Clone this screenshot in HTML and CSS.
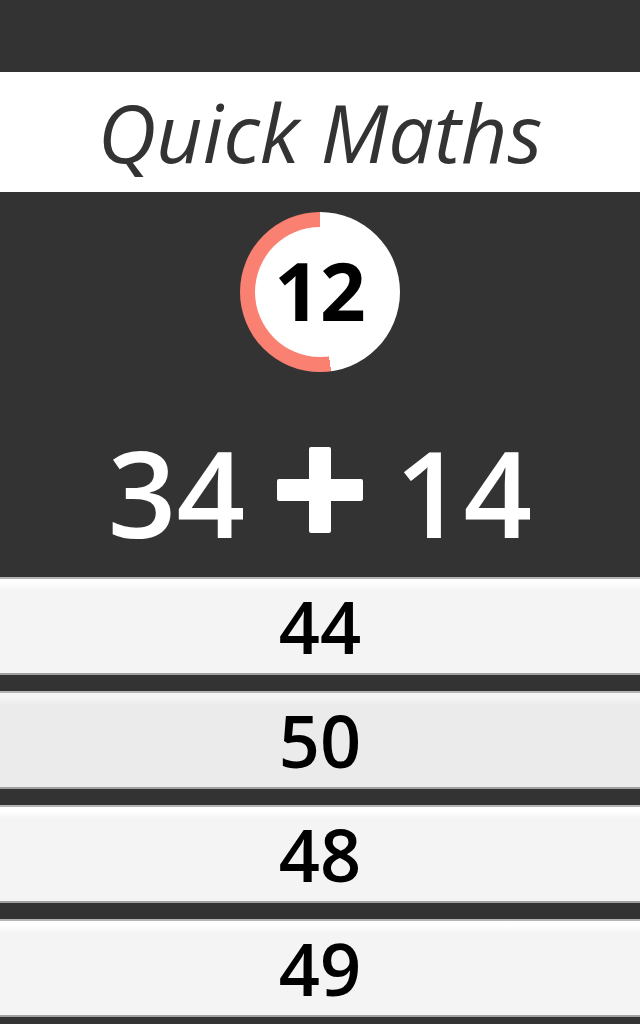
FILE: index.html
```html
<!DOCTYPE html>
<html lang="en">
<head>
<meta charset="utf-8">
<title>Quick Maths</title>
<link rel="stylesheet" href="styles.css">
</head>
<body>
<div class="topbar"></div>
<header class="header"><h1 class="title">Quick Maths</h1></header>
<section class="stage">
  <div class="timer">
    <div class="timer-face">12</div>
  </div>
  <div class="equation">
    <span class="operand">34</span>
    <svg class="op" width="86" height="86" viewBox="0 0 86 86" aria-label="plus">
      <path d="M34 0h18a2 2 0 0 1 2 2v30h30a2 2 0 0 1 2 2v18a2 2 0 0 1-2 2H54v30a2 2 0 0 1-2 2H34a2 2 0 0 1-2-2V54H2a2 2 0 0 1-2-2V34a2 2 0 0 1 2-2h30V2a2 2 0 0 1 2-2z" fill="#fff"/>
    </svg>
    <span class="operand">14</span>
  </div>
</section>
<main class="answers">
  <button class="answer">44</button>
  <button class="answer answer-active">50</button>
  <button class="answer">48</button>
  <button class="answer">49</button>
</main>
</body>
</html>
```
FILE: styles.css
```css
html, body {
  margin: 0;
  padding: 0;
}
body {
  background: #333333;
  font-family: "Open Sans", "Noto Sans", sans-serif;
  width: 640px;
  height: 1024px;
  overflow: hidden;
}
.topbar {
  height: 72px;
}
.header {
  height: 120px;
  background: #ffffff;
  display: flex;
  align-items: center;
  justify-content: center;
}
.title {
  margin: 0;
  font-size: 81px;
  font-style: italic;
  font-weight: 400;
  color: #333333;
  line-height: normal;
  padding-bottom: 2px;
}
.stage {
  display: flex;
  flex-direction: column;
  align-items: center;
  padding: 20px 0 25px;
}
.timer {
  width: 160px;
  height: 160px;
  border-radius: 50%;
  background: conic-gradient(#ffffff 0deg 172deg, #fa8072 172deg 360deg);
  display: flex;
  align-items: center;
  justify-content: center;
}
.timer-face {
  width: 130px;
  height: 130px;
  border-radius: 50%;
  background: #ffffff;
  display: flex;
  align-items: center;
  justify-content: center;
  font-size: 80px;
  font-weight: 700;
  color: #000000;
  line-height: 1;
  padding-bottom: 4px;
  box-sizing: border-box;
}
.equation {
  margin-top: 60px;
  height: 120px;
  display: flex;
  align-items: center;
  justify-content: center;
  gap: 32px;
  color: #ffffff;
}
.operand {
  font-size: 120px;
  font-weight: 600;
  line-height: 1;
}
.op {
  display: block;
  margin-top: -4px;
}
.answers {
  display: flex;
  flex-direction: column;
  gap: 16px;
}
.answer {
  display: flex;
  align-items: center;
  justify-content: center;
  height: 98px;
  box-sizing: border-box;
  margin: 0;
  padding: 0;
  width: 100%;
  border: 0;
  border-top: 2px solid #b4b4b4;
  border-bottom: 2px solid #a0a0a0;
  background: linear-gradient(#ffffff 0, #ffffff 4px, #f4f4f4 12px);
  font-family: "Open Sans", "Noto Sans", sans-serif;
  font-size: 72px;
  font-weight: 600;
  color: #000000;
  line-height: normal;
}
.answer-active {
  background: linear-gradient(#f6f6f6 0, #f6f6f6 4px, #ebebeb 12px);
}
```
